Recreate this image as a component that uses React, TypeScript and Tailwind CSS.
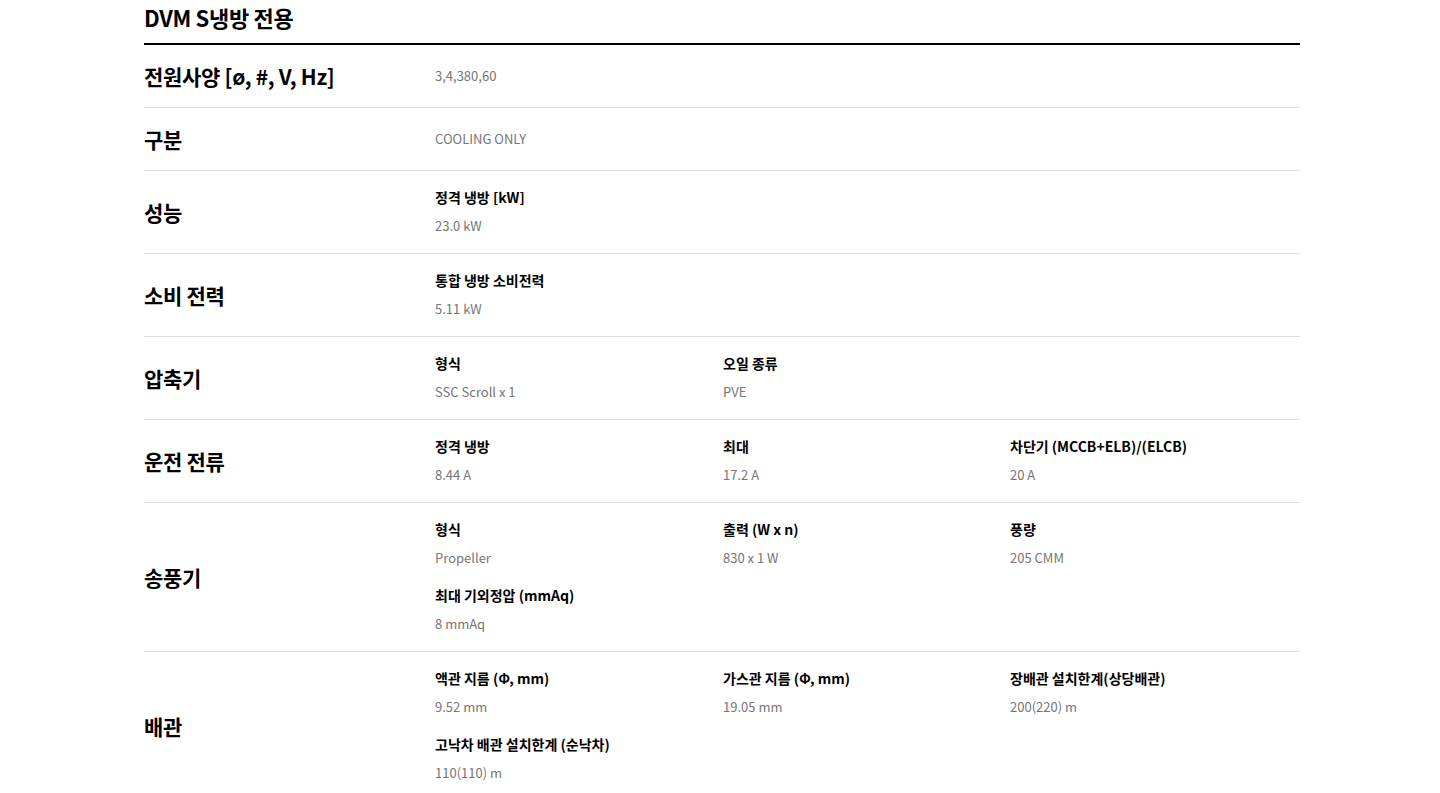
type Item = { label?: string; value: string };
type Row = { title: string; items: Item[] };

const rows: Row[] = [
  { title: '전원사양 [ø, #, V, Hz]', items: [{ value: '3,4,380,60' }] },
  { title: '구분', items: [{ value: 'COOLING ONLY' }] },
  { title: '성능', items: [{ label: '정격 냉방 [kW]', value: '23.0 kW' }] },
  { title: '소비 전력', items: [{ label: '통합 냉방 소비전력', value: '5.11 kW' }] },
  {
    title: '압축기',
    items: [
      { label: '형식', value: 'SSC Scroll x 1' },
      { label: '오일 종류', value: 'PVE' },
    ],
  },
  {
    title: '운전 전류',
    items: [
      { label: '정격 냉방', value: '8.44 A' },
      { label: '최대', value: '17.2 A' },
      { label: '차단기 (MCCB+ELB)/(ELCB)', value: '20 A' },
    ],
  },
  {
    title: '송풍기',
    items: [
      { label: '형식', value: 'Propeller' },
      { label: '출력 (W x n)', value: '830 x 1 W' },
      { label: '풍량', value: '205 CMM' },
      { label: '최대 기외정압 (mmAq)', value: '8 mmAq' },
    ],
  },
  {
    title: '배관',
    items: [
      { label: '액관 지름 (Φ, mm)', value: '9.52 mm' },
      { label: '가스관 지름 (Φ, mm)', value: '19.05 mm' },
      { label: '장배관 설치한계(상당배관)', value: '200(220) m' },
      { label: '고낙차 배관 설치한계 (순낙차)', value: '110(110) m' },
    ],
  },
];

function SpecRow({ row }: { row: Row }) {
  const simple = row.items.length === 1 && !row.items[0].label;
  return (
    <div className="flex border-b border-[#dddddd]">
      <div className="w-[291px] shrink-0 flex items-center">
        <h3 className="text-[21px] leading-[28px] font-bold text-black tracking-[-0.3px]">{row.title}</h3>
      </div>
      {simple ? (
        <div className="flex-1 flex items-center h-[62px]">
          <span className="text-[13px] text-[#767676]">{row.items[0].value}</span>
        </div>
      ) : (
        <div className="flex-1 grid grid-cols-[288px_287px_1fr] gap-y-[17px] pt-[16px] pb-[17px]">
          {row.items.map((it, i) => (
            <div key={i} className="flex flex-col gap-[9px]">
              <span className="text-[14px] leading-[20px] font-semibold text-black">{it.label}</span>
              <span className="text-[13px] leading-[20px] text-[#767676]">{it.value}</span>
            </div>
          ))}
        </div>
      )}
    </div>
  );
}

export default function App() {
  return (
    <div
      className="w-[1440px] min-h-[793px] bg-white pl-[144px] pr-[140px]"
      style={{ fontFamily: '"Noto Sans CJK KR", "Noto Sans", sans-serif' }}
    >
      <h2 className="text-[22px] leading-[30px] font-bold text-black pt-[2px] pb-[11px] border-b-2 border-black tracking-[-0.3px]">
        DVM S냉방 전용
      </h2>
      {rows.map((r, i) => (
        <SpecRow key={i} row={r} />
      ))}
    </div>
  );
}
